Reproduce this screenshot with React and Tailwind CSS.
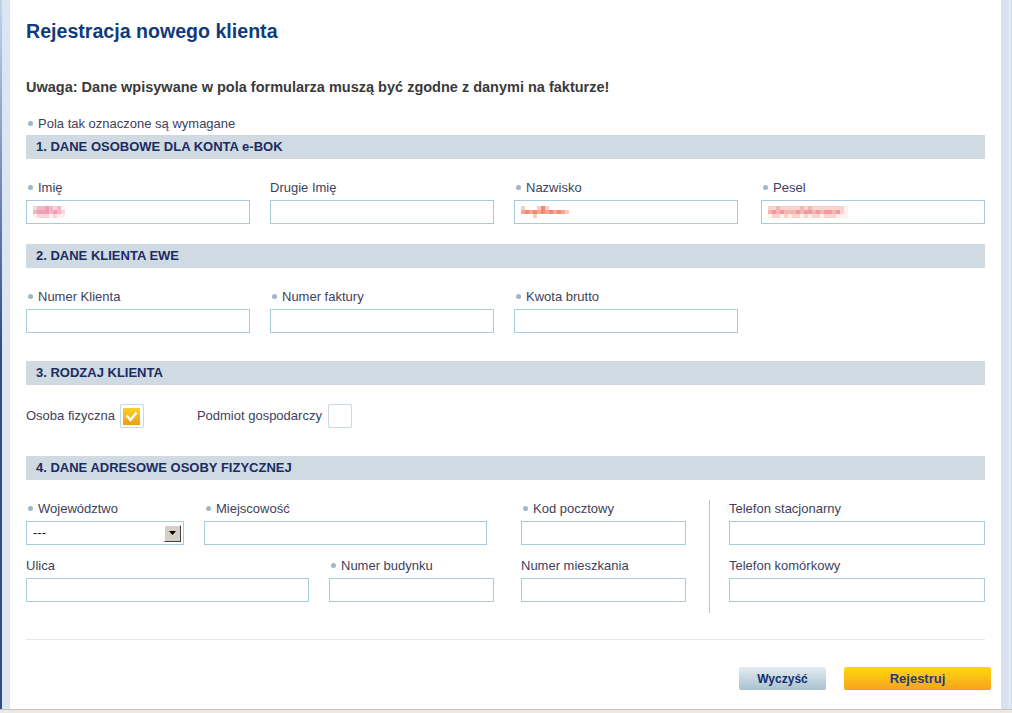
import React from 'react'

// mosaic blocks standing in for the blurred personal data in the inputs
const pink = ['bg-[#fdf0f3]', 'bg-[#f9d4dc]', 'bg-[#f4b6c6]', 'bg-[#ef9fb3]']
const orange = ['bg-transparent', 'bg-[#f8cdc2]', 'bg-[#f4a893]', 'bg-[#ee8c72]']
const peach = ['bg-[#fdf1ef]', 'bg-[#f9d3cc]', 'bg-[#f4b6b0]', 'bg-[#ee9aa0]']

const mosaics = {
  imie: { tones: pink, rows: ['12232120', '23332321', '01110100'] },
  nazwisko: { tones: orange, rows: ['100013100000', '232323232321', '000100000000'] },
  pesel: { tones: peach, rows: ['11211111212111111110', '23232223233232332310', '01101011010110111000'] },
}

function Mosaic({ name }) {
  const m = mosaics[name]
  return (
    <div className="flex flex-col ml-[6px] blur-[0.4px]">
      {m.rows.map((row, i) => (
        <div key={i} className="flex">
          {row.split('').map((c, j) => (
            <span key={j} className={`w-[4px] h-[4px] ${m.tones[Number(c)]}`} />
          ))}
        </div>
      ))}
    </div>
  )
}

function Dot() {
  return <span className="inline-block w-[5px] h-[5px] rounded-full bg-[#a3b6c8] ml-[2px] mr-[5px] -mt-[2px]" />
}

function Label({ req, children }) {
  return (
    <div className="h-[17px] pt-px flex items-center text-[13px] leading-4 text-[#403f5c] whitespace-nowrap">
      {req && <Dot />}
      {children}
    </div>
  )
}

function Box({ children }) {
  return (
    <div className="mt-[4px] h-6 border border-[#a9c9dc] bg-white flex items-center">
      {children}
    </div>
  )
}

function Field({ label, req, className = '', mosaic }) {
  return (
    <div className={className}>
      <Label req={req}>{label}</Label>
      <Box>{mosaic && <Mosaic name={mosaic} />}</Box>
    </div>
  )
}

function Section({ children, className = '' }) {
  return (
    <div className={`h-6 bg-[#cfdae2] pl-[10px] flex items-center text-[13px] font-bold text-[#1b2b63] ${className}`}>
      {children}
    </div>
  )
}

function Check({ checked }) {
  return (
    <div className="w-6 h-6 border border-[#c9d8e4] rounded-[2px] bg-white flex items-center justify-center">
      {checked && (
        <div className="w-[17px] h-[17px] bg-gradient-to-b from-[#fdd022] to-[#ee9a1c] flex items-center justify-center">
          <svg width="13" height="11" viewBox="0 0 13 11">
            <path d="M1.5 4.5 L5.5 9 L11.5 1.5" fill="none" stroke="#fff" strokeWidth="2.6" strokeLinejoin="round" />
          </svg>
        </div>
      )}
    </div>
  )
}

function Select() {
  return (
    <div className="w-[158px]">
      <Label req>Województwo</Label>
      <div className="mt-[4px] h-6 border border-[#a9c9dc] bg-white flex items-center justify-between pl-[6px] pr-[2px]">
        <span className="text-[13px] text-[#222]">---</span>
        <div className="w-[17px] h-[17px] bg-[#d4d0c8] border-t border-l border-t-white border-l-white border-r border-b border-r-[#404040] border-b-[#404040] flex items-center justify-center">
          <svg width="7" height="4" viewBox="0 0 7 4">
            <path d="M0 0 H7 L3.5 4 Z" fill="#000" />
          </svg>
        </div>
      </div>
    </div>
  )
}

export default function App() {
  return (
    <div className="w-[1012px] h-[713px] flex flex-col bg-white overflow-hidden font-['Liberation_Sans',Arial,sans-serif]">
      <div className="flex flex-1 min-h-0">
        {/* left frame */}
        <div className="w-[10px] flex">
          <div className="w-[2px] bg-gradient-to-b from-[#c6d3e8] via-[#2b4b8b] to-[#2b4b8b]" />
          <div className="flex-1 bg-[#dce6f2]" />
        </div>

        <main className="flex-1 px-4 pt-[19px]">
          <h1 className="text-[19.6px] leading-6 font-bold text-[#103b7a]">Rejestracja nowego klienta</h1>
          <p className="mt-[35px] text-[14.5px] leading-[18px] font-bold text-[#3a3a3a]">
            Uwaga: Dane wpisywane w pola formularza muszą być zgodne z danymi na fakturze!
          </p>
          <div className="mt-[19px]">
            <Label req>Pola tak oznaczone są wymagane</Label>
          </div>

          <Section className="mt-[3px]">1. DANE OSOBOWE DLA KONTA e-BOK</Section>
          <div className="mt-5 flex gap-5">
            <Field label="Imię" req mosaic="imie" className="w-[224px]" />
            <Field label="Drugie Imię" className="w-[224px]" />
            <Field label="Nazwisko" req mosaic="nazwisko" className="w-[224px]" />
            <Field label="Pesel" req mosaic="pesel" className="w-[224px] ml-[3px]" />
          </div>

          <Section className="mt-5">2. DANE KLIENTA EWE</Section>
          <div className="mt-5 flex gap-5">
            <Field label="Numer Klienta" req className="w-[224px]" />
            <Field label="Numer faktury" req className="w-[224px]" />
            <Field label="Kwota brutto" req className="w-[224px]" />
          </div>

          <Section className="mt-[28px]">3. RODZAJ KLIENTA</Section>
          <div className="mt-[19px] flex items-center text-[13px] text-[#403f5c]">
            <span>Osoba fizyczna</span>
            <div className="ml-[5px]"><Check checked /></div>
            <span className="ml-[53px]">Podmiot gospodarczy</span>
            <div className="ml-[6px]"><Check /></div>
          </div>

          <Section className="mt-[28px]">4. DANE ADRESOWE OSOBY FIZYCZNEJ</Section>
          <div className="mt-5 flex items-start h-[113px]">
            <div className="w-[468px]">
              <div className="flex">
                <Select />
                <Field label="Miejscowość" req className="w-[283px] ml-5" />
              </div>
              <div className="flex mt-3">
                <Field label="Ulica" className="w-[283px]" />
                <Field label="Numer budynku" req className="w-[165px] ml-5" />
              </div>
            </div>
            <div className="w-[165px] ml-[27px]">
              <Field label="Kod pocztowy" req />
              <Field label="Numer mieszkania" className="mt-3" />
            </div>
            <div className="w-px h-[113px] bg-[#a9c9dc] ml-[23px]" />
            <div className="flex-1 ml-[19px]">
              <Field label="Telefon stacjonarny" />
              <Field label="Telefon komórkowy" className="mt-3" />
            </div>
          </div>

          <div className="mt-[26px] h-px bg-[#e6e6e6]" />

          <div className="mt-[27px] flex justify-end gap-[18px] -mr-[6px]">
            <button className="w-[87px] h-[23px] rounded-[2px] bg-gradient-to-b from-[#e6ecf0] to-[#a8c1d0] text-[12px] font-bold text-[#10306e]">
              Wyczyść
            </button>
            <button className="w-[147px] h-[23px] rounded-[2px] bg-gradient-to-b from-[#ffd80b] to-[#f6a21c] text-[13px] font-bold text-[#1f3c7c]">
              Rejestruj
            </button>
          </div>
        </main>

        {/* right frame */}
        <div className="w-[11px] flex bg-[#d9e3ef]">
          <div className="w-[8px]" />
          <div className="w-px bg-[#eaf0f7]" />
        </div>
      </div>
      <div className="h-[4px] border-t border-[#c8c4ba] bg-[#ece9e2]" />
    </div>
  )
}
